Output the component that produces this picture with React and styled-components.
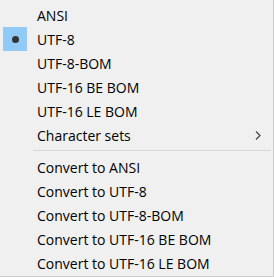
import styled, { createGlobalStyle } from 'styled-components'

const GlobalStyle = createGlobalStyle`
  html, body {
    margin: 0;
    padding: 0;
    background: #f0f0f0;
  }
`

const Menu = styled.div`
  box-sizing: border-box;
  width: 274px;
  height: 277px;
  padding: 3px 0 0 0;
  background: #f0f0f0;
  border-right: 1px solid #cccccc;
  border-bottom: 1px solid #cccccc;
  font-family: 'Open Sans', 'Noto Sans', sans-serif;
  font-size: 14px;
  color: #000;
  overflow: hidden;
`

const Item = styled.div`
  position: relative;
  display: flex;
  align-items: center;
  height: 24px;
  padding-left: 37px;
  white-space: nowrap;
`

const Check = styled.span`
  position: absolute;
  left: 3px;
  top: 0;
  width: 24px;
  height: 24px;
  background: #91c9f7;
  display: flex;
  align-items: center;
  justify-content: center;

  &::after {
    content: '';
    width: 7px;
    height: 7px;
    border-radius: 50%;
    background: #333333;
  }
`

const Arrow = styled.svg`
  position: absolute;
  right: 12px;
  top: 8px;
`

const Separator = styled.div`
  height: 1px;
  margin: 3px 2px 4px 33px;
  background: #d7d7d7;
`

const encodings = ['ANSI', 'UTF-8', 'UTF-8-BOM', 'UTF-16 BE BOM', 'UTF-16 LE BOM']

function App() {
  return (
    <>
      <GlobalStyle />
      <Menu>
        {encodings.map((name) => (
          <Item key={name}>
            {name === 'UTF-8' && <Check />}
            {name}
          </Item>
        ))}
        <Item>
          Character sets
          <Arrow width="6" height="9" viewBox="0 0 6 9">
            <path d="M1 0.5 L5 4.5 L1 8.5" fill="none" stroke="#444" strokeWidth="1.2" />
          </Arrow>
        </Item>
        <Separator />
        {encodings.map((name) => (
          <Item key={'c' + name}>Convert to {name}</Item>
        ))}
      </Menu>
    </>
  )
}

export default App
